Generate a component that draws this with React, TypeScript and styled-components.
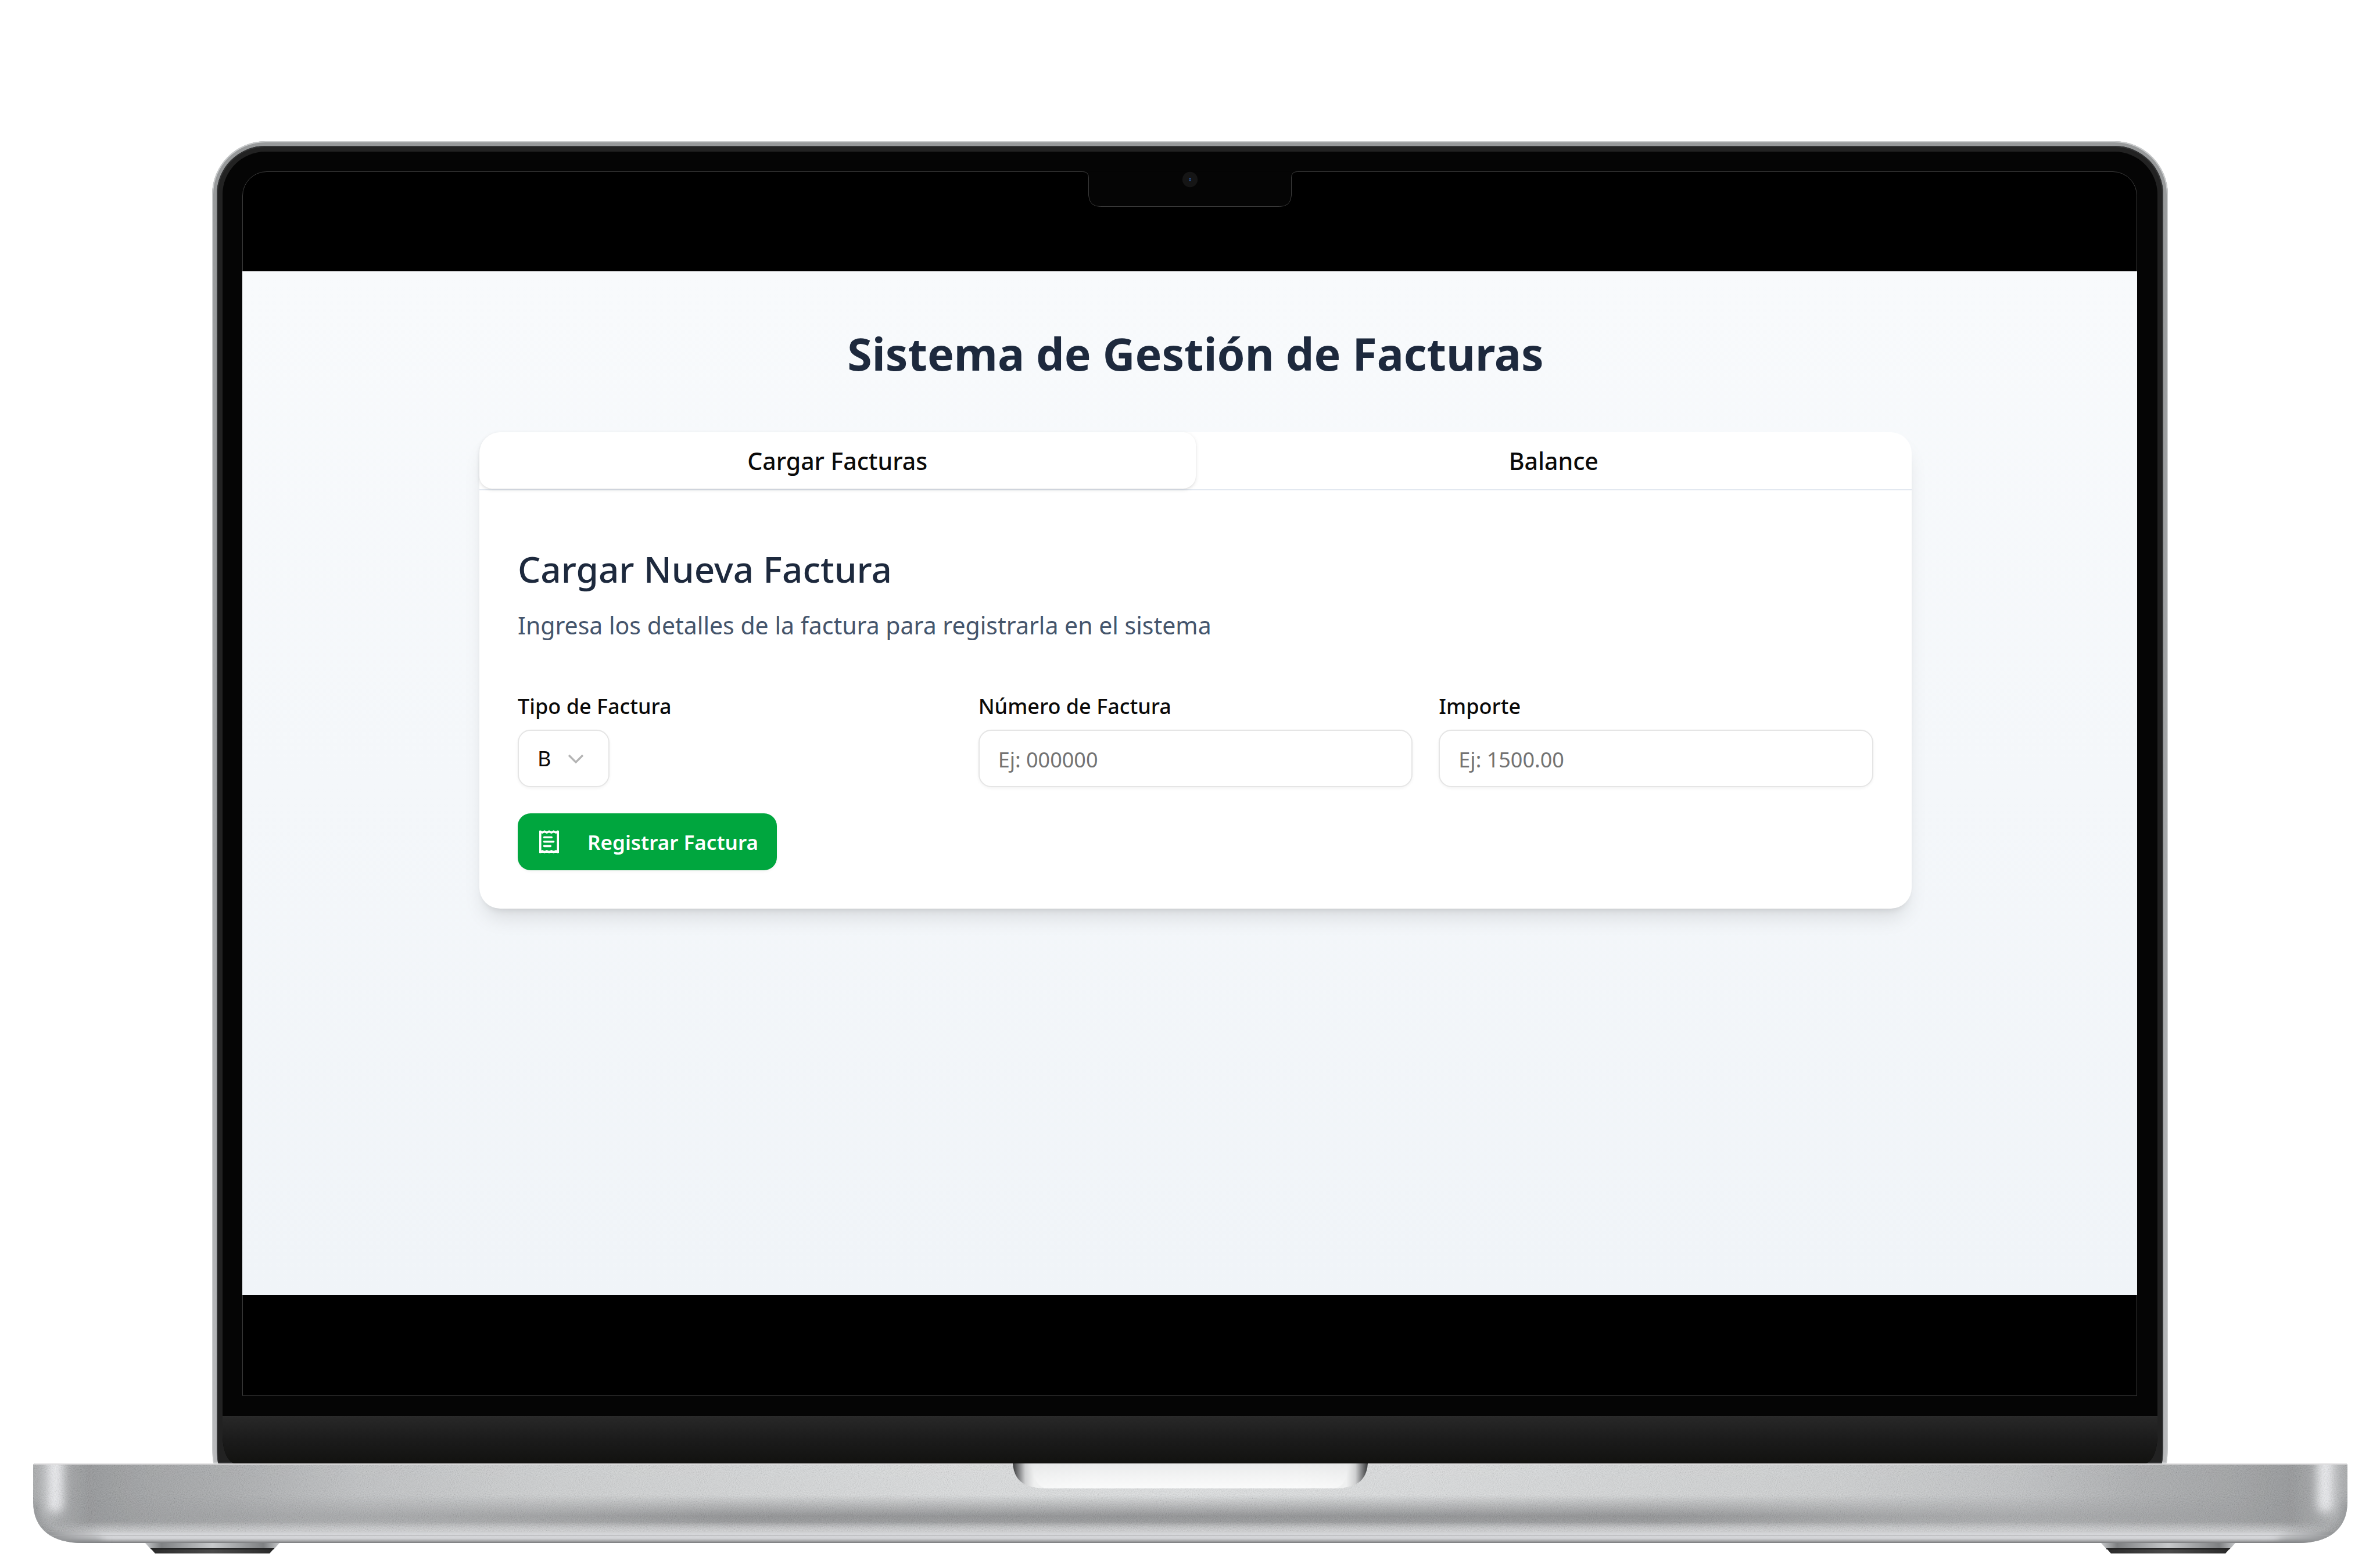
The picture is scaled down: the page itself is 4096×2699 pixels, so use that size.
import React, { useState } from "react";
import styled, { createGlobalStyle } from "styled-components";

const GlobalStyle = createGlobalStyle`
  *, *::before, *::after { box-sizing: border-box; }
  body {
    margin: 0;
    background: #ffffff;
    font-family: "Noto Sans", "Open Sans", sans-serif;
  }
  button, input, select { font: inherit; }
`;

/* ---------- Laptop ---------- */

const Stage = styled.div`
  display: flex;
  flex-direction: column;
  min-height: 100vh;
  padding: 243px 56px 25px 57px;
`;

const Lid = styled.div`
  display: flex;
  flex: 1;
  flex-direction: column;
  margin: 0 309px 0 308px;
  padding: 8px 8px 0;
  border-radius: 92px 92px 3px 3px / 92px 92px 40px 40px;
  background: linear-gradient(#97999a, #a3a5a7 50%, #b9babc);
  box-shadow: inset 0 0 0 2px #c9cbcc;
`;

const Rim = styled.div`
  display: flex;
  flex: 1;
  flex-direction: column;
  padding: 10px 10px 0;
  border-radius: 84px 84px 3px 3px / 84px 84px 40px 40px;
  background: #222222;
  box-shadow: inset 0 0 0 2px #323334;
`;

const Bezel = styled.div`
  display: flex;
  flex: 1;
  flex-direction: column;
  overflow: hidden;
  border-radius: 74px 74px 22px 22px / 74px 74px 48px 48px;
  background: #050505;
`;

const Screen = styled.div`
  position: relative;
  display: flex;
  flex: 1;
  flex-direction: column;
  margin: 34px 35px 0 34px;
  border: 1px solid #3b3b3b;
  border-radius: 42px 42px 0 0;
  background: #000000;
`;

const Notch = styled.svg`
  position: absolute;
  top: -1px;
  left: 50%;
  width: 369px;
  height: 62px;
  transform: translateX(-50%);
`;

const Chin = styled.div`
  height: 82px;
  margin-top: 34px;
  border-top: 1px solid #303030;
  background: linear-gradient(#282828, #1b1b1b 50%, #121210);
`;

const BaseDrawing = styled.svg`
  display: block;
  width: 100%;
  height: 155px;
`;

/* ---------- App ---------- */

const AppPage = styled.main`
  flex: 1;
  margin: 171px -1px 173px;
  padding: 97px 388px 0 408px;
  background: linear-gradient(#f8fafc, #f0f4f8);
`;

const PageTitle = styled.h1`
  margin: 0 0 90px;
  color: #1d293d;
  font-size: 77px;
  font-weight: 700;
  line-height: 90px;
  text-align: center;
`;

const Card = styled.section`
  border-radius: 36px;
  background: #ffffff;
  box-shadow: 0 23px 34px -7px rgba(0, 0, 0, 0.1), 0 9px 14px -9px rgba(0, 0, 0, 0.14);
`;

const TabList = styled.div`
  display: grid;
  grid-template-columns: 1fr 1fr;
  padding-bottom: 1px;
  border-bottom: 2px solid #e2e8f0;
`;

const Tab = styled.button<{ $active: boolean }>`
  height: 97px;
  padding: 0;
  border: 0;
  border-radius: 36px 22px 22px 22px;
  background: ${(p) => (p.$active ? "#ffffff" : "transparent")};
  box-shadow: ${(p) =>
    p.$active ? "0 2px 7px rgba(0, 0, 0, 0.1), 0 2px 5px -2px rgba(0, 0, 0, 0.1)" : "none"};
  color: #0a0a0a;
  font-size: 41px;
  font-weight: 500;
  cursor: pointer;
`;

const Panel = styled.form`
  padding: 95px 66px 66px;
`;

const PanelTitle = styled.h2`
  margin: 0 0 24px;
  color: #1d293d;
  font-size: 62px;
  font-weight: 500;
  line-height: 80px;
`;

const PanelText = styled.p`
  margin: 0 0 89px;
  color: #45556c;
  font-size: 41px;
  line-height: 66px;
`;

const Fields = styled.div`
  display: grid;
  grid-template-columns: repeat(3, 1fr);
  gap: 45px;
  margin-bottom: 45px;
`;

const Field = styled.div`
  display: flex;
  flex-direction: column;
  align-items: flex-start;
  gap: 22px;
`;

const Label = styled.label`
  color: #0a0a0a;
  font-size: 36px;
  font-weight: 500;
  line-height: 36px;
`;

const TextInput = styled.input`
  width: 100%;
  height: 99px;
  padding: 4px 32px 0;
  border: 2px solid #e5e5e5;
  border-radius: 22px;
  outline: 0;
  background: #ffffff;
  box-shadow: 0 2px 5px rgba(0, 0, 0, 0.05);
  color: #0a0a0a;
  font-size: 36px;
  &::placeholder { color: #737373; opacity: 1; }
`;

const SelectWrap = styled.div`
  position: relative;
`;

const Select = styled.select`
  display: block;
  width: 158px;
  height: 99px;
  padding: 0 32px;
  border: 2px solid #e5e5e5;
  border-radius: 22px;
  outline: 0;
  appearance: none;
  background: #ffffff;
  box-shadow: 0 2px 5px rgba(0, 0, 0, 0.05);
  color: #0a0a0a;
  font-size: 36px;
`;

const Chevron = styled.svg`
  position: absolute;
  top: 42px;
  right: 44px;
  width: 28px;
  height: 16px;
  pointer-events: none;
`;

const SubmitButton = styled.button`
  display: flex;
  align-items: center;
  gap: 49px;
  height: 98px;
  padding: 0 32px 0 37px;
  border: 0;
  border-radius: 22px;
  background: #00a63e;
  box-shadow: 0 2px 5px rgba(0, 0, 0, 0.05);
  color: #ffffff;
  font-size: 35px;
  font-weight: 600;
  cursor: pointer;
`;

const ReceiptGlyph = styled.svg`
  width: 34px;
  height: 40px;
`;

function ReceiptIcon() {
  return (
    <ReceiptGlyph viewBox="0 0 36 42" fill="none" stroke="#ffffff" strokeWidth="3.8" aria-hidden="true">
      <path d="M1.9 .5V41.5M34.1 .5V41.5" />
      <path d="M1.5 2L5.500 4L9.700 2.200L13.800 4L18 2.200L22.200 4L26.300 2.200L30.500 4L34.500 2" />
      <path d="M1.5 40L5.500 38L9.700 39.800L13.800 38L18 39.800L22.200 38L26.300 39.800L30.500 38L34.500 40" />
      <path d="M9 12.8H22.5M9 20.8H26M9 28.8H20.5" strokeLinecap="round" />
    </ReceiptGlyph>
  );
}

function CameraNotch() {
  return (
    <Notch viewBox="0 0 369 62" aria-hidden="true">
      <path d="M0 0H369V1H0Z" fill="#050505" />
      <path
        d="M0 .5Q10 .5 10 11V41Q11 60.500 30 60.500H339Q358 60.500 359 41V11Q359 .5 369 .5"
        fill="#050505"
        stroke="#3b3b3b"
      />
      <circle cx="184.500" cy="14" r="13.200" fill="#151515" />
      <circle cx="184.500" cy="12.500" r="1.300" fill="#2c5ba8" />
      <circle cx="184.500" cy="15.500" r="1.300" fill="#2c5ba8" />
    </Notch>
  );
}

function Foot() {
  return (
    <g>
      <path d="M193 137H424L415 147H202Z" fill="url(#footMetal)" />
      <path d="M202 146H415L407 155H210Z" fill="url(#footRubber)" />
      <path d="M202 146H415V148H203Z" fill="#1c1c1c" />
    </g>
  );
}

const BODY =
  "M0 3Q0 0 4 0H3979Q3983 0 3983 3V66C3983 114 3950 137 3898 137H85C33 137 0 114 0 66Z";

function LaptopBase() {
  return (
    <BaseDrawing viewBox="0 0 3983 155" preserveAspectRatio="none" aria-hidden="true">
      <defs>
        <linearGradient id="metal">
          <stop offset="0" stopColor="#a6a8aa" />
          <stop offset=".004" stopColor="#aeb0b2" />
          <stop offset=".024" stopColor="#939597" />
          <stop offset=".05" stopColor="#9fa1a3" />
          <stop offset=".09" stopColor="#aaacae" />
          <stop offset=".14" stopColor="#bec0c2" />
          <stop offset=".22" stopColor="#cccecf" />
          <stop offset=".4" stopColor="#d9dbdc" />
          <stop offset=".5" stopColor="#dcdedf" />
          <stop offset=".6" stopColor="#d9dbdc" />
          <stop offset=".78" stopColor="#cccecf" />
          <stop offset=".86" stopColor="#bec0c2" />
          <stop offset=".91" stopColor="#aaacae" />
          <stop offset=".95" stopColor="#9fa1a3" />
          <stop offset=".976" stopColor="#939597" />
          <stop offset=".996" stopColor="#aeb0b2" />
          <stop offset="1" stopColor="#a6a8aa" />
        </linearGradient>
        <linearGradient id="band" x2="0" y2="1">
          <stop offset="0" stopColor="#8a8b8d" stopOpacity="0" />
          <stop offset=".4" stopColor="#8a8b8d" stopOpacity="0" />
          <stop offset=".66" stopColor="#8a8b8d" stopOpacity=".95" />
          <stop offset=".74" stopColor="#8e8f91" stopOpacity=".9" />
          <stop offset=".86" stopColor="#c6c7c9" stopOpacity=".9" />
          <stop offset=".9" stopColor="#cfd0d2" />
        </linearGradient>
        <linearGradient id="bandFade">
          <stop offset="0" stopColor="#000" />
          <stop offset=".08" stopColor="#555" />
          <stop offset=".3" stopColor="#fff" />
          <stop offset=".7" stopColor="#fff" />
          <stop offset=".92" stopColor="#555" />
          <stop offset="1" stopColor="#000" />
        </linearGradient>
        <mask id="bandMask">
          <rect width="3983" height="137" fill="url(#bandFade)" />
        </mask>
        <linearGradient id="lipFade">
          <stop offset=".006" stopColor="#000" />
          <stop offset=".03" stopColor="#fff" />
          <stop offset=".97" stopColor="#fff" />
          <stop offset=".994" stopColor="#000" />
        </linearGradient>
        <mask id="lipMask">
          <rect width="3983" height="137" fill="url(#lipFade)" />
        </mask>
        <linearGradient id="lip" x2="0" y2="1">
          <stop offset="0" stopColor="#cfd0d2" stopOpacity="0" />
          <stop offset=".5" stopColor="#cfd0d2" stopOpacity=".9" />
          <stop offset=".58" stopColor="#d6d7da" />
          <stop offset=".78" stopColor="#d3d4d7" />
          <stop offset=".9" stopColor="#a9aaac" />
          <stop offset="1" stopColor="#77787a" />
        </linearGradient>
        <linearGradient id="scoop">
          <stop offset="0" stopColor="#38393a" />
          <stop offset=".015" stopColor="#77787a" />
          <stop offset=".035" stopColor="#cfd0d1" />
          <stop offset=".06" stopColor="#eff0f0" />
          <stop offset=".2" stopColor="#f5f6f6" />
          <stop offset=".8" stopColor="#f5f6f6" />
          <stop offset=".94" stopColor="#eff0f0" />
          <stop offset=".965" stopColor="#cfd0d1" />
          <stop offset=".985" stopColor="#77787a" />
          <stop offset="1" stopColor="#38393a" />
        </linearGradient>
        <linearGradient id="scoopLight" x2="0" y2="1">
          <stop offset="0" stopColor="#e2e3e4" stopOpacity=".6" />
          <stop offset="1" stopColor="#ffffff" stopOpacity=".5" />
        </linearGradient>
        <linearGradient id="footMetal">
          <stop offset="0" stopColor="#c4c6c8" />
          <stop offset=".12" stopColor="#7e8082" />
          <stop offset=".5" stopColor="#c8cacc" />
          <stop offset=".88" stopColor="#7e8082" />
          <stop offset="1" stopColor="#c4c6c8" />
        </linearGradient>
        <linearGradient id="footRubber">
          <stop offset="0" stopColor="#2a2a2a" />
          <stop offset=".5" stopColor="#4a4a4a" />
          <stop offset="1" stopColor="#2a2a2a" />
        </linearGradient>
        <filter id="glow" x="-100%" y="-40%" width="300%" height="180%">
          <feGaussianBlur stdDeviation="8" />
        </filter>
        <filter id="grain" x="0" y="0" width="100%" height="100%">
          <feTurbulence type="fractalNoise" baseFrequency=".6" numOctaves="2" />
          <feColorMatrix values="1.500 0 0 0 -.2  1.500 0 0 0 -.2  1.500 0 0 0 -.2  0 0 0 0 1" />
        </filter>
        <clipPath id="bodyClip">
          <path d={BODY} />
        </clipPath>
      </defs>
      <Foot />
      <g transform="translate(3983 0) scale(-1 1)">
        <Foot />
      </g>
      <g clipPath="url(#bodyClip)">
        <rect width="3983" height="137" fill="url(#metal)" />
        <rect width="3983" height="137" fill="url(#band)" mask="url(#bandMask)" />
        <rect y="100" width="3983" height="37" fill="url(#lip)" mask="url(#lipMask)" />
        <rect x="24" y="-20" width="28" height="105" rx="14" fill="#e9eaed" filter="url(#glow)" />
        <rect x="3931" y="-20" width="28" height="105" rx="14" fill="#e9eaed" filter="url(#glow)" />
        <path
          d="M0 66C0 114 33 137 85 137H120"
          fill="none"
          stroke="#808284"
          strokeWidth="10"
          filter="url(#glow)"
        />
        <path
          d="M3983 66C3983 114 3950 137 3898 137H3863"
          fill="none"
          stroke="#808284"
          strokeWidth="10"
          filter="url(#glow)"
        />
        <rect width="3983" height="118" filter="url(#grain)" opacity=".13" />
        <rect x="30" y="123" width="3923" height="1" fill="#a9aaac" />
        <rect width="3983" height="2" fill="#dddcdd" />
      </g>
      <path d="M1686 0C1688 28 1704 43 1744 43H2239C2279 43 2295 28 2297 0Z" fill="url(#scoop)" />
      <path d="M1718 0C1722 30 1730 43 1748 43H2235C2253 43 2261 30 2265 0Z" fill="url(#scoopLight)" />
    </BaseDrawing>
  );
}

export default function App() {
  const [tab, setTab] = useState<"cargar" | "balance">("cargar");

  return (
    <>
      <GlobalStyle />
      <Stage>
        <Lid>
          <Rim>
            <Bezel>
              <Screen>
                <CameraNotch />
                <AppPage>
                  <PageTitle>Sistema de Gestión de Facturas</PageTitle>
                  <Card>
                    <TabList role="tablist">
                      <Tab
                        type="button"
                        role="tab"
                        aria-selected={tab === "cargar"}
                        $active={tab === "cargar"}
                        onClick={() => setTab("cargar")}
                      >
                        Cargar Facturas
                      </Tab>
                      <Tab
                        type="button"
                        role="tab"
                        aria-selected={tab === "balance"}
                        $active={tab === "balance"}
                        onClick={() => setTab("balance")}
                      >
                        Balance
                      </Tab>
                    </TabList>
                    <Panel onSubmit={(e) => e.preventDefault()}>
                      <PanelTitle>Cargar Nueva Factura</PanelTitle>
                      <PanelText>Ingresa los detalles de la factura para registrarla en el sistema</PanelText>
                      <Fields>
                        <Field>
                          <Label htmlFor="tipo">Tipo de Factura</Label>
                          <SelectWrap>
                            <Select id="tipo" defaultValue="B">
                              <option>A</option>
                              <option>B</option>
                              <option>C</option>
                            </Select>
                            <Chevron viewBox="0 0 28 16" fill="none" stroke="#b4b4b4" strokeWidth="3.400">
                              <path d="M2 2L14 14L26 2" />
                            </Chevron>
                          </SelectWrap>
                        </Field>
                        <Field>
                          <Label htmlFor="numero">Número de Factura</Label>
                          <TextInput id="numero" placeholder="Ej: 000000" />
                        </Field>
                        <Field>
                          <Label htmlFor="importe">Importe</Label>
                          <TextInput id="importe" placeholder="Ej: 1500.00" />
                        </Field>
                      </Fields>
                      <SubmitButton type="submit">
                        <ReceiptIcon />
                        Registrar Factura
                      </SubmitButton>
                    </Panel>
                  </Card>
                </AppPage>
              </Screen>
              <Chin />
            </Bezel>
          </Rim>
        </Lid>
        <LaptopBase />
      </Stage>
    </>
  );
}
